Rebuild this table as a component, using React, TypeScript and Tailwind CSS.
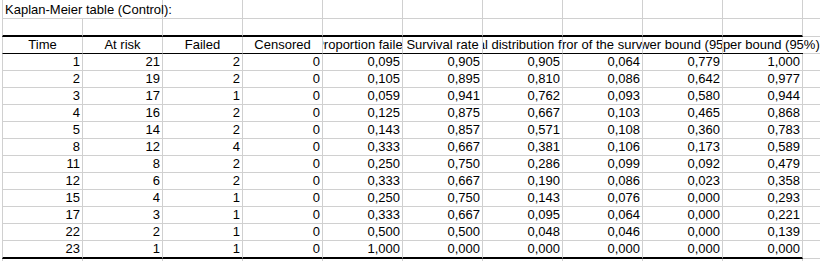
import React from 'react';

const headers = [
  'Time',
  'At risk',
  'Failed',
  'Censored',
  'Proportion failed',
  'Survival rate',
  'Survival distribution function',
  'Standard error of the survival function',
  'Lower bound (95%)',
  'Upper bound (95%)',
];

const rows: string[][] = [
  ['1', '21', '2', '0', '0,095', '0,905', '0,905', '0,064', '0,779', '1,000'],
  ['2', '19', '2', '0', '0,105', '0,895', '0,810', '0,086', '0,642', '0,977'],
  ['3', '17', '1', '0', '0,059', '0,941', '0,762', '0,093', '0,580', '0,944'],
  ['4', '16', '2', '0', '0,125', '0,875', '0,667', '0,103', '0,465', '0,868'],
  ['5', '14', '2', '0', '0,143', '0,857', '0,571', '0,108', '0,360', '0,783'],
  ['8', '12', '4', '0', '0,333', '0,667', '0,381', '0,106', '0,173', '0,589'],
  ['11', '8', '2', '0', '0,250', '0,750', '0,286', '0,099', '0,092', '0,479'],
  ['12', '6', '2', '0', '0,333', '0,667', '0,190', '0,086', '0,023', '0,358'],
  ['15', '4', '1', '0', '0,250', '0,750', '0,143', '0,076', '0,000', '0,293'],
  ['17', '3', '1', '0', '0,333', '0,667', '0,095', '0,064', '0,000', '0,221'],
  ['22', '2', '1', '0', '0,500', '0,500', '0,048', '0,046', '0,000', '0,139'],
  ['23', '1', '1', '0', '1,000', '0,000', '0,000', '0,000', '0,000', '0,000'],
];

const blank = Array.from({ length: 10 }, (_, i) => i);

export default function App() {
  return (
    <div className="w-[820px] h-[261px] overflow-hidden bg-white text-black text-[13px] leading-[16px] font-['Liberation_Sans',Arial,sans-serif] pl-[2px]">
      {/* Title row */}
      <div className="flex h-[19px] border-b border-[#d0d0d0]">
        <div className="w-[161px] shrink-0 border-l border-r border-[#d0d0d0] flex items-end pl-[2px] whitespace-nowrap">
          Kaplan-Meier table (Control):
        </div>
        {blank.slice(2).map((i) => (
          <div key={i} className="w-[80px] shrink-0 border-r border-[#d0d0d0]" />
        ))}
        <div className="flex-1" />
      </div>

      {/* Empty row with thick bottom border */}
      <div className="flex h-[18px]">
        {blank.map((i) => (
          <div
            key={i}
            className={`${i === 0 ? 'w-[81px] border-l' : 'w-[80px]'} shrink-0 border-r border-b-2 border-[#d0d0d0] border-b-black`}
          />
        ))}
        <div className="flex-1 border-b border-[#d0d0d0]" />
      </div>

      {/* Header row */}
      <div className="flex h-[17px]">
        {headers.map((h, i) => (
          <div
            key={h}
            className={`${i === 0 ? 'w-[81px] border-l border-l-[#d0d0d0]' : 'w-[80px]'} ${
              i === 9 ? '[clip-path:inset(0_-40px_0_0)]' : 'border-r border-r-[#d0d0d0] overflow-hidden'
            } shrink-0 border-b border-b-black flex justify-center whitespace-nowrap`}
          >
            <span className="shrink-0">{h}</span>
          </div>
        ))}
        <div className="flex-1 border-b border-[#d0d0d0]" />
      </div>

      {/* Data rows */}
      {rows.map((r, ri) => {
        const last = ri === rows.length - 1;
        return (
          <div key={ri} className={`flex ${last ? 'h-[18px]' : 'h-[17px]'}`}>
            {r.map((v, i) => (
              <div
                key={i}
                className={`${i === 0 ? 'w-[81px] border-l' : 'w-[80px]'} shrink-0 border-r border-[#d0d0d0] text-right pr-[2px] ${
                  last ? 'border-b-2 border-b-black' : 'border-b'
                }`}
              >
                {v}
              </div>
            ))}
            <div className="flex-1 border-b border-[#d0d0d0]" />
          </div>
        );
      })}

      {/* Trailing empty row */}
      <div className="flex h-[17px]">
        {blank.map((i) => (
          <div key={i} className={`${i === 0 ? 'w-[81px] border-l' : 'w-[80px]'} shrink-0 border-r border-b border-[#d0d0d0]`} />
        ))}
        <div className="flex-1 border-b border-[#d0d0d0]" />
      </div>
    </div>
  );
}
